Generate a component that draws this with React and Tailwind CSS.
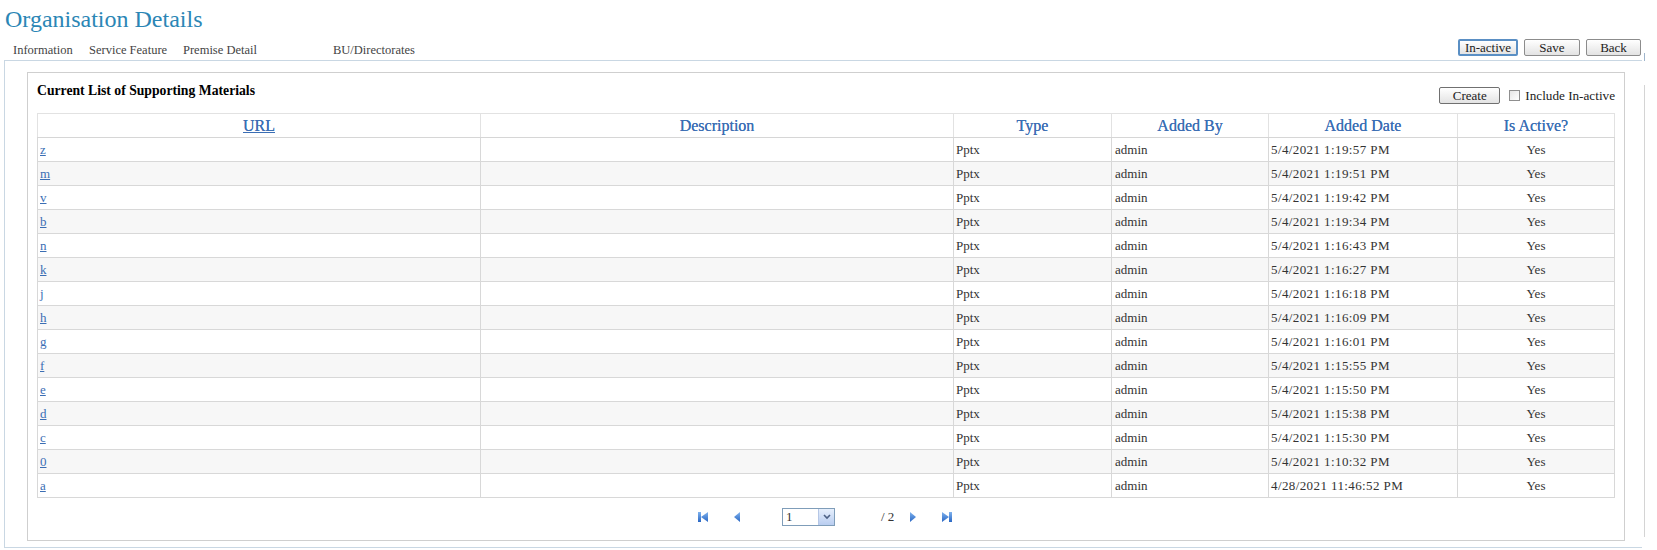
import React from 'react';

const rows = [
  { url: 'z', date: '5/4/2021 1:19:57 PM' },
  { url: 'm', date: '5/4/2021 1:19:51 PM' },
  { url: 'v', date: '5/4/2021 1:19:42 PM' },
  { url: 'b', date: '5/4/2021 1:19:34 PM' },
  { url: 'n', date: '5/4/2021 1:16:43 PM' },
  { url: 'k', date: '5/4/2021 1:16:27 PM' },
  { url: 'j', date: '5/4/2021 1:16:18 PM' },
  { url: 'h', date: '5/4/2021 1:16:09 PM' },
  { url: 'g', date: '5/4/2021 1:16:01 PM' },
  { url: 'f', date: '5/4/2021 1:15:55 PM' },
  { url: 'e', date: '5/4/2021 1:15:50 PM' },
  { url: 'd', date: '5/4/2021 1:15:38 PM' },
  { url: 'c', date: '5/4/2021 1:15:30 PM' },
  { url: '0', date: '5/4/2021 1:10:32 PM' },
  { url: 'a', date: '4/28/2021 11:46:52 PM' },
];

const btn =
  'h-[17px] flex items-center justify-center rounded-[2px] bg-gradient-to-b from-white to-[#e3e3e3] text-[13px] leading-none text-[#222]';

const th = 'border border-[#e2e2e2] border-b-[#d6d6d6] p-0 font-normal leading-[20px] [text-shadow:0_0_0.6px_#3b6eb4]';

const PagerIcon = ({ dir, bar }) => (
  <svg width="12" height="12" viewBox="0 0 12 12">
    <defs>
      <linearGradient id={`g-${dir}-${bar ? 1 : 0}`} x1="0" y1="0" x2="0" y2="1">
        <stop offset="0" stopColor="#7fb2ee" />
        <stop offset="1" stopColor="#2a67c4" />
      </linearGradient>
    </defs>
    {dir === 'left' ? (
      <g fill={`url(#g-${dir}-${bar ? 1 : 0})`}>
        {bar && <rect x="1" y="1" width="3" height="10" />}
        <polygon points={bar ? '11,1 11,11 4,6' : '9,1 9,11 3,6'} />
      </g>
    ) : (
      <g fill={`url(#g-${dir}-${bar ? 1 : 0})`}>
        <polygon points={bar ? '1,1 1,11 8,6' : '3,1 3,11 9,6'} />
        {bar && <rect x="8" y="1" width="3" height="10" />}
      </g>
    )}
  </svg>
);

export default function App() {
  return (
    <div className="relative w-[1657px] h-[550px] overflow-hidden bg-white text-[#333] font-['Liberation_Serif',serif]">
      {/* Title */}
      <div className="pl-[5px] pt-[5px] h-[32px] text-[24px] leading-[28px] text-[#2b86b5]">
        Organisation Details
      </div>

      {/* Tabs + actions */}
      <div className="flex h-[28px] items-start text-[12.5px]">
        <div className="flex pl-[13px] mt-[10px] leading-[16px] text-[#444]">
          <span className="w-[76px]">Information</span>
          <span className="w-[94px]">Service Feature</span>
          <span className="w-[150px]">Premise Detail</span>
          <span>BU/Directorates</span>
        </div>
        <div className="ml-auto mr-[16px] mt-[7px] flex gap-[6px]">
          <button className={`${btn} w-[60px] border-2 border-[#5a8fc4]`}>In-active</button>
          <button className={`${btn} w-[56px] border border-[#8c8c8c]`}>Save</button>
          <button className={`${btn} w-[55px] border border-[#8c8c8c]`}>Back</button>
        </div>
      </div>

      {/* Outer frame */}
      <div className="relative ml-[4px] w-[1638px] h-[488px] border-l border-t border-b border-[#c9d7e3]">
        <div className="absolute right-[-3px] top-[-8px] h-[8px] w-[1px] bg-[#9fb5cc]" />
        <div className="absolute right-[-3px] top-[24px] bottom-[10px] w-[1px] bg-[#d4d4d4]" />

        {/* Inner panel */}
        <div className="ml-[22px] mt-[11px] w-[1598px] h-[469px] border border-[#cfcfcf]">
          <div className="flex h-[40px] items-start px-[9px]">
            <div className="mt-[9px] leading-[18px] text-[13.7px] font-bold text-black">
              Current List of Supporting Materials
            </div>
            <div className="ml-auto mt-[14px] flex items-center">
              <button className={`${btn} w-[61px] border border-[#707070]`}>Create</button>
              <span className="ml-[9px] w-[11px] h-[11px] border border-[#8f8f8f] bg-gradient-to-br from-[#e6e6e6] to-white" />
              <span className="ml-[5px] text-[13.2px] leading-[16px] text-[#222]">Include In-active</span>
            </div>
          </div>

          {/* Grid */}
          <div className="px-[9px]">
            <table className="w-[1577px] table-fixed border-collapse border border-[#b9b9b9] text-[13px] leading-[18px]">
              <colgroup>
                <col className="w-[443px]" />
                <col className="w-[473px]" />
                <col className="w-[158px]" />
                <col className="w-[157px]" />
                <col className="w-[189px]" />
                <col className="w-[157px]" />
              </colgroup>
              <thead>
                <tr className="h-[24px] text-[16px] text-[#3b6eb4]">
                  <th className={th}>
                    <span className="underline">URL</span>
                  </th>
                  <th className={th}>Description</th>
                  <th className={th}>Type</th>
                  <th className={th}>Added By</th>
                  <th className={th}>Added Date</th>
                  <th className={th}>Is Active?</th>
                </tr>
              </thead>
              <tbody>
                {rows.map((r, i) => (
                  <tr key={i} className={`h-[24px] ${i % 2 ? 'bg-[#f7f7f7]' : 'bg-white'}`}>
                    <td className="border border-[#d8d8d8] px-[2px]">
                      <span className="underline text-[#3b6eb4]">{r.url}</span>
                    </td>
                    <td className="border border-[#d8d8d8]" />
                    <td className="border border-[#d8d8d8] px-[2px]">Pptx</td>
                    <td className="border border-[#d8d8d8] px-[3px]">admin</td>
                    <td className="border border-[#d8d8d8] px-[2px] tracking-[0.4px]">{r.date}</td>
                    <td className="border border-[#d8d8d8] text-center">Yes</td>
                  </tr>
                ))}
              </tbody>
            </table>
          </div>

          {/* Pager */}
          <div className="mt-[10px] flex items-center pl-[669px] h-[18px] text-[13px]">
            <PagerIcon dir="left" bar />
            <span className="ml-[22px]"><PagerIcon dir="left" /></span>
            <div className="ml-[39px] flex w-[53px] h-[18px] border border-[#7f9db9] bg-white">
              <span className="flex-1 pl-[3px] leading-[16px]">1</span>
              <span className="w-[16px] h-[16px] flex items-center justify-center bg-gradient-to-b from-[#e6effc] to-[#b9cdf0] border-l border-[#b6c7e6]">
                <svg width="8" height="6" viewBox="0 0 8 6">
                  <path d="M1 1 L4 4 L7 1" stroke="#4d6185" strokeWidth="1.6" fill="none" />
                </svg>
              </span>
            </div>
            <span className="ml-[46px] w-[14px]">/ 2</span>
            <span className="ml-[12px]"><PagerIcon dir="right" /></span>
            <span className="ml-[22px]"><PagerIcon dir="right" bar /></span>
          </div>
        </div>
      </div>
    </div>
  );
}
